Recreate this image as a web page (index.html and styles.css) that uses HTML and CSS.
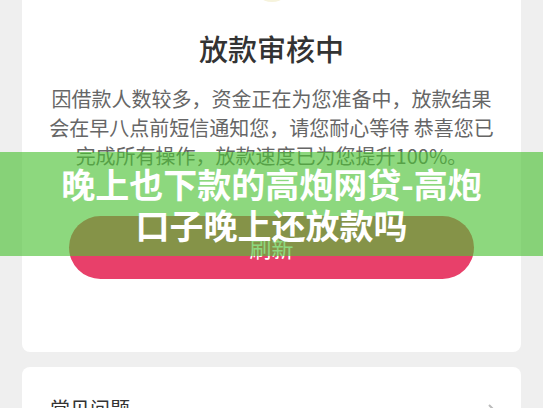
FILE: index.html
```html
<!DOCTYPE html>
<html lang="zh-CN">
  <head>
    <meta charset="UTF-8" />
    <meta name="viewport" content="width=device-width, initial-scale=1.0" />
    <title>放款审核中</title>
    <link rel="stylesheet" href="styles.css">
  </head>

  <body>
    <div class="page">
      <div class="status-card">
        <div class="status-icon"></div>
        <h1 class="status-title">放款审核中</h1>
        <p class="status-text">因借款人数较多，资金正在为您准备中，放款结果会在早八点前短信通知您，请您耐心等待 恭喜您已完成所有操作，放款速度已为您提升100%。</p>
        <button class="refresh-btn">刷新</button>
      </div>

      <div class="faq-card">
        <span class="faq-title">常见问题</span>
        <svg class="faq-arrow" width="10" height="16" viewBox="0 0 10 16">
          <path d="M2 2 L8 8 L2 14" fill="none" stroke="#bbbbbb" stroke-width="2" />
        </svg>
      </div>
    </div>

    <div class="banner">晚上也下款的高炮网贷-高炮口子晚上还放款吗</div>
  </body>
</html>
```

FILE: styles.css
```css
body {
  margin: 0;
  background: #efefef;
  font-family: "Noto Sans CJK SC", "Noto Sans", sans-serif;
  overflow: hidden;
}

.page {
  padding: 0 22px;
}

.status-card {
  background: #ffffff;
  border-radius: 0 0 8px 8px;
  padding: 0 24px 73px;
  display: flex;
  flex-direction: column;
  align-items: center;
}

.status-icon {
  width: 40px;
  height: 40px;
  margin-top: -38px;
  border-radius: 50%;
  background: #f6f3dc;
}

.status-title {
  margin: 26px 0 0;
  font-size: 29px;
  line-height: 40px;
  font-weight: 500;
  color: #333333;
}

.status-text {
  margin: 17px 0 0;
  font-size: 20px;
  line-height: 28.5px;
  color: #666666;
  text-align: center;
}

.refresh-btn {
  margin-top: 45px;
  width: 405px;
  height: 63px;
  border: none;
  border-radius: 32px;
  background: #e8406a;
  color: #ffffff;
  font-family: inherit;
  font-size: 22px;
}

.faq-card {
  margin-top: 15px;
  background: #ffffff;
  border-radius: 8px;
  padding: 28px 24px 40px 28px;
  display: flex;
  justify-content: space-between;
  align-items: center;
}

.faq-title {
  font-size: 20px;
  line-height: 28px;
  color: #333333;
}

.faq-arrow {
  margin-top: 4px;
}

.banner {
  position: absolute;
  top: 152px;
  left: 0;
  right: 0;
  height: 104px;
  box-sizing: border-box;
  padding: 11px 50px;
  background: rgba(77, 194, 53, 0.64);
  color: #ffffff;
  font-size: 34px;
  line-height: 41px;
  font-weight: 700;
  text-align: center;
}
```
